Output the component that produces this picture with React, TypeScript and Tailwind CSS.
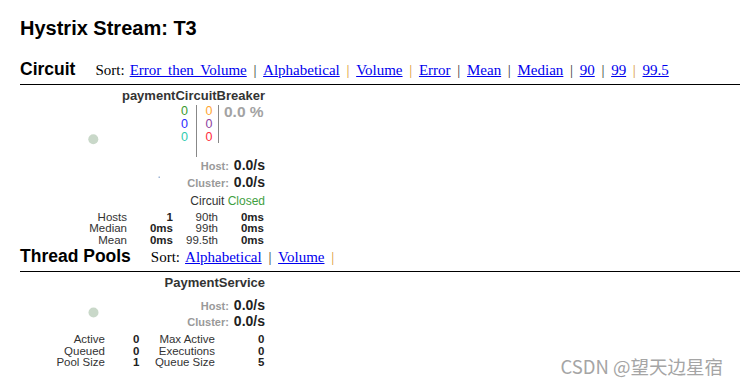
const circuitSorts = [
  'Error then Volume',
  'Alphabetical',
  'Volume',
  'Error',
  'Mean',
  'Median',
  '90',
  '99',
  '99.5',
]
// pipe colour after each link (true = orange)
const circuitPipes = [false, true, true, false, false, false, false, true]

const Pipe = ({ orange }: { orange: boolean }) => (
  <span className={`inline-block w-[16.4px] text-center ${orange ? 'text-[#d9962e]' : 'text-[#333]'}`}>|</span>
)

const SortLink = ({ label }: { label: string }) => (
  <a href="#" className="text-[#0000ee] underline [word-spacing:3px]">
    {label}
  </a>
)

const SectionHeader = ({ title, children }: { title: string; children: React.ReactNode }) => (
  <div className="flex items-baseline border-b border-black pb-[4px]">
    <h2 className="text-[17.5px] leading-[21px] font-bold text-black">{title}</h2>
    <div className="ml-[20px] font-['Liberation_Serif','Times_New_Roman',serif] text-[15px] leading-[19px] text-black">
      <span className="mr-[5px]">Sort:</span>
      {children}
    </div>
  </div>
)

const Rate = ({ label }: { label: string }) => (
  <div className="text-right text-[14px] leading-[inherit] font-bold text-[#222]">
    <span className="mr-[5px] text-[11px] leading-none text-[#999]">{label}</span>
    0.0/s
  </div>
)

const CircuitCard = () => (
  <div className="relative w-[245px] text-right">
    <svg className="absolute left-0 top-0" width="245" height="160">
      <circle cx="73.3" cy="51.3" r="5" fill="#c9d8c9" />
      <rect x="138.5" y="88.5" width="1.5" height="1.5" fill="#9fb6d6" />
    </svg>
    <div className="relative mt-[3px] text-[13px] leading-[15px] font-bold text-[#333]">paymentCircuitBreaker</div>
    <div className="relative mt-[1.5px] flex justify-end text-[12.5px] leading-[13.3px]">
      <div className="h-[52px] border-r border-[#888] pr-[8px] text-right">
        <div className="text-[#3a9a2e]">0</div>
        <div className="text-[#2b2bff]">0</div>
        <div className="text-[#2fcbaf]">0</div>
      </div>
      <div className="h-[38px] w-[22px] border-r border-[#888] pl-[8.5px] text-left">
        <div className="text-[#ffa533]">0</div>
        <div className="text-[#8e3f9e]">0</div>
        <div className="text-[#ff2c3c]">0</div>
      </div>
      <div className="w-[46px] pl-[5px] text-left text-[15.5px] font-bold text-[#a3a3a3]">0.0 %</div>
    </div>
    <div className="relative leading-[17px]">
      <Rate label="Host:" />
      <Rate label="Cluster:" />
    </div>
    <div className="relative mt-[3px] text-[12px] leading-[14px] text-[#333]">
      Circuit <span className="text-[#3fa03f]">Closed</span>
    </div>
    <div className="relative mt-[4px] grid grid-cols-[107px_46px_45px_46px] text-right text-[11.5px] leading-[11.5px] text-[#333]">
      <div>Hosts</div>
      <div className="font-bold text-[#222]">1</div>
      <div>90th</div>
      <div className="font-bold text-[#222]">0ms</div>
      <div>Median</div>
      <div className="font-bold text-[#222]">0ms</div>
      <div>99th</div>
      <div className="font-bold text-[#222]">0ms</div>
      <div>Mean</div>
      <div className="font-bold text-[#222]">0ms</div>
      <div>99.5th</div>
      <div className="font-bold text-[#222]">0ms</div>
    </div>
  </div>
)

const ThreadPoolCard = () => (
  <div className="relative w-[245px] text-right">
    <svg className="absolute left-0 top-0" width="245" height="60">
      <circle cx="73.5" cy="37.5" r="5" fill="#c9d8c9" />
    </svg>
    <div className="relative mt-[3px] text-[13px] leading-[15px] font-bold text-[#333]">PaymentService</div>
    <div className="relative mt-[6.5px] leading-[16px]">
      <Rate label="Host:" />
      <Rate label="Cluster:" />
    </div>
    <div className="relative mt-[5px] grid grid-cols-[85px_34.5px_75.5px_49.5px] text-right text-[11.5px] leading-[11.75px] text-[#333]">
      <div>Active</div>
      <div className="font-bold text-[#222]">0</div>
      <div>Max Active</div>
      <div className="font-bold text-[#222]">0</div>
      <div>Queued</div>
      <div className="font-bold text-[#222]">0</div>
      <div>Executions</div>
      <div className="font-bold text-[#222]">0</div>
      <div>Pool Size</div>
      <div className="font-bold text-[#222]">1</div>
      <div>Queue Size</div>
      <div className="font-bold text-[#222]">5</div>
    </div>
  </div>
)

export default function App() {
  return (
    <div className="relative min-h-[385px] bg-white pl-[20px] pt-[16px] font-['Liberation_Sans',Arial,sans-serif] text-black">
      <h1 className="text-[20px] leading-[24px] font-bold">Hystrix Stream: T3</h1>

      <div className="mt-[19.4px]">
        <SectionHeader title="Circuit">
          {circuitSorts.map((s, i) => (
            <span key={s}>
              <SortLink label={s} />
              {i < circuitPipes.length && <Pipe orange={circuitPipes[i]} />}
            </span>
          ))}
        </SectionHeader>
      </div>
      <CircuitCard />

      <SectionHeader title="Thread Pools">
        <SortLink label="Alphabetical" />
        <Pipe orange={false} />
        <SortLink label="Volume" />
        <Pipe orange={true} />
      </SectionHeader>
      <ThreadPoolCard />

      <div className="absolute right-[17px] bottom-[8px] font-['Noto_Sans_CJK_SC','Noto_Sans',sans-serif] text-[18.5px] leading-[22px] text-[#a5a5a5] [text-shadow:0_0_1px_#fff]">
        CSDN @望天边星宿
      </div>
    </div>
  )
}
